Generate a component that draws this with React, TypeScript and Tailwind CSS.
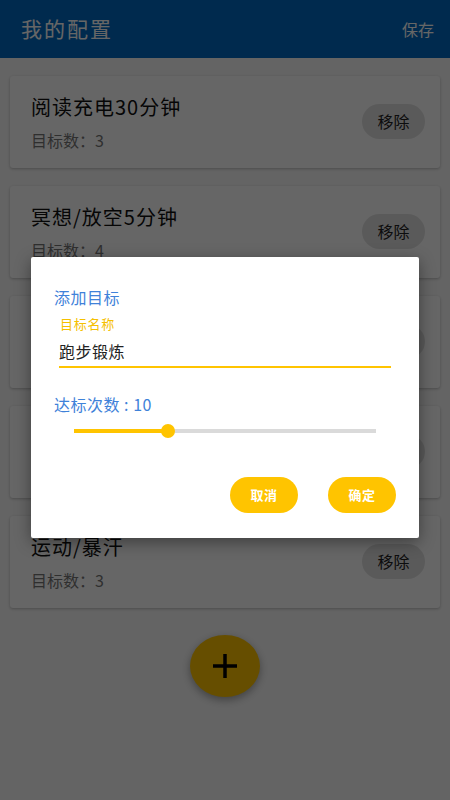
import React from 'react';

type Goal = {
	title: string;
	count: number;
};

const goals: Goal[] = [
	{ title: '阅读充电30分钟', count: 3 },
	{ title: '冥想/放空5分钟', count: 4 },
	{ title: '早睡早起', count: 5 },
	{ title: '喝水八杯', count: 8 },
	{ title: '运动/暴汗', count: 3 },
];

const font = { fontFamily: '"Noto Sans CJK SC", "Noto Sans", sans-serif' };

// one goal row in the list
function GoalCard({ goal }: { goal: Goal }) {
	return (
		<div className="flex h-[92px] items-center justify-between rounded-[3px] bg-white pl-[21px] pr-[15px] shadow-[0_1px_3px_rgba(0,0,0,0.25)]">
			<div className="flex flex-col">
				<span className="text-[20px] leading-[26px] tracking-[1px] text-[#111]">{goal.title}</span>
				<span className="mt-[9px] text-[16px] leading-[22px] text-[#777]">
					目标数：{goal.count}
				</span>
			</div>
			<button
				type="button"
				className="mt-[-2px] h-[35px] w-[63px] rounded-full bg-[#e2e2e2] text-[16px] text-[#222]"
			>
				移除
			</button>
		</div>
	);
}

export default function App() {
	const value = 10;
	const pct = 31;

	return (
		<div className="relative h-[800px] w-full overflow-hidden bg-[#fafafa]" style={font}>
			{/* top bar */}
			<div className="flex h-[58px] items-center justify-between bg-[#006ac2] pl-[21px] pr-[16px]">
				<span className="text-[21px] tracking-[2px] text-white">我的配置</span>
				<span className="text-[16px] text-white">保存</span>
			</div>

			{/* list */}
			<div className="flex flex-col gap-[18px] px-[10px] pt-[18px]">
				{goals.map((g) => (
					<GoalCard key={g.title} goal={g} />
				))}
			</div>

			{/* add button */}
			<div className="mt-[27px] flex justify-center">
				<button
					type="button"
					className="flex h-[62px] w-[70px] items-center justify-center rounded-[50%] bg-[#ffc400] shadow-[0_3px_8px_rgba(0,0,0,0.35)]"
				>
					<svg width="28" height="28" viewBox="0 0 28 28">
						<path d="M14 2v24M2 14h24" stroke="#000" strokeWidth="3.5" />
					</svg>
				</button>
			</div>

			{/* dim + dialog */}
			<div className="absolute inset-0 flex justify-center bg-black/60 pt-[257px]">
				<div className="h-[281px] w-[388px] rounded-[2px] bg-white shadow-[0_4px_16px_rgba(0,0,0,0.4)]">
					<div className="pl-[23px] pt-[29px] text-[16px] leading-[22px] tracking-[0.5px] text-[#3f82d9]">
						添加目标
					</div>
					<div className="mx-[28px] mt-[7px]">
						<div className="pl-[1px] text-[13px] leading-[18px] tracking-[0.75px] text-[#f5c000]">目标名称</div>
						<div className="mt-[7px] border-b-2 border-[#ffc400] pb-[4px] text-[16px] leading-[22px] tracking-[0.5px] text-[#222]">
							跑步锻炼
						</div>
					</div>
					<div className="mt-[25px] pl-[23px] text-[16px] leading-[22px] tracking-[0.5px] text-[#3f82d9]">
						达标次数&nbsp;:&nbsp;{value}
					</div>
					{/* slider */}
					<div className="relative mx-[43px] mt-[14px] h-[4px] bg-[#dadada]">
						<div className="h-full bg-[#ffc400]" style={{ width: `${pct}%` }} />
						<div
							className="absolute top-[-5px] h-[14px] w-[14px] -translate-x-1/2 rounded-full bg-[#ffc400]"
							style={{ left: `${pct}%` }}
						/>
					</div>
					<div className="mt-[44px] flex justify-end gap-[30px] pr-[23px]">
						<button
							type="button"
							className="h-[36px] w-[68px] rounded-full bg-[#ffc400] text-[13px] font-bold tracking-[0.5px] text-white"
						>
							取消
						</button>
						<button
							type="button"
							className="h-[36px] w-[68px] rounded-full bg-[#ffc400] text-[13px] font-bold tracking-[0.5px] text-white"
						>
							确定
						</button>
					</div>
				</div>
			</div>
		</div>
	);
}
